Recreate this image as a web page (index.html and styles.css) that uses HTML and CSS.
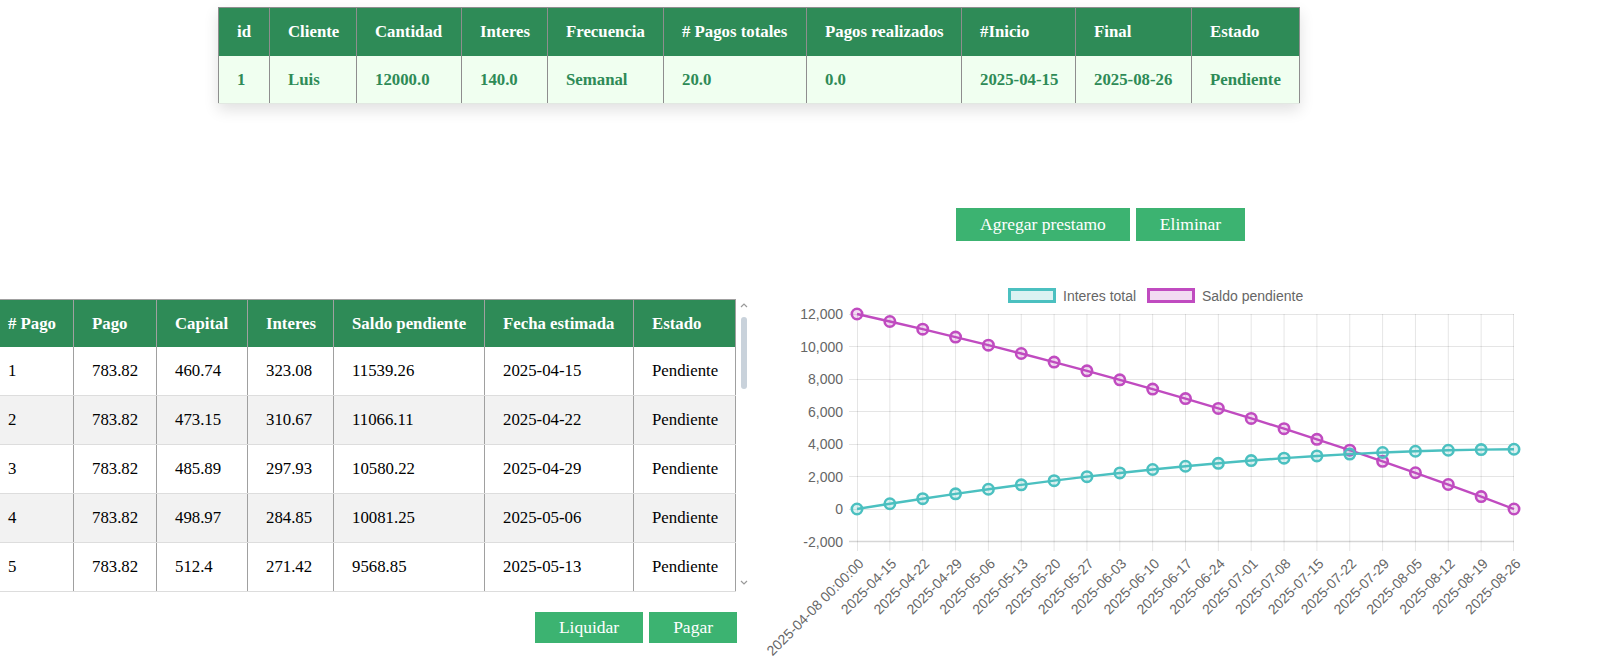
FILE: index.html
```html
<!DOCTYPE html>
<html lang="es">
<head>
<meta charset="utf-8">
<title>Prestamos</title>
<link rel="stylesheet" href="styles.css">
</head>
<body>
<main class="page">
  <section class="loan">
    <table class="loan-table">
      <colgroup>
        <col style="width:51px"><col style="width:87px"><col style="width:105px"><col style="width:86px"><col style="width:116px"><col style="width:143px"><col style="width:155px"><col style="width:114px"><col style="width:116px"><col style="width:108px">
      </colgroup>
      <thead>
        <tr><th>id</th><th>Cliente</th><th>Cantidad</th><th>Interes</th><th>Frecuencia</th><th># Pagos totales</th><th>Pagos realizados</th><th>#Inicio</th><th>Final</th><th>Estado</th></tr>
      </thead>
      <tbody>
        <tr><td>1</td><td>Luis</td><td>12000.0</td><td>140.0</td><td>Semanal</td><td>20.0</td><td>0.0</td><td>2025-04-15</td><td>2025-08-26</td><td>Pendiente</td></tr>
      </tbody>
    </table>
  </section>

  <div class="actions">
    <button class="btn btn-lg">Agregar prestamo</button>
    <button class="btn btn-lg">Eliminar</button>
  </div>

  <section class="bottom">
    <div class="schedule-col">
      <div class="schedule-box">
        <div class="schedule">
          <table class="schedule-table">
            <colgroup>
              <col style="width:84px"><col style="width:83px"><col style="width:91px"><col style="width:86px"><col style="width:151px"><col style="width:149px"><col style="width:102px">
            </colgroup>
            <thead>
              <tr><th># Pago</th><th>Pago</th><th>Capital</th><th>Interes</th><th>Saldo pendiente</th><th>Fecha estimada</th><th>Estado</th></tr>
            </thead>
            <tbody>
              <tr><td>1</td><td>783.82</td><td>460.74</td><td>323.08</td><td>11539.26</td><td>2025-04-15</td><td>Pendiente</td></tr>
              <tr><td>2</td><td>783.82</td><td>473.15</td><td>310.67</td><td>11066.11</td><td>2025-04-22</td><td>Pendiente</td></tr>
              <tr><td>3</td><td>783.82</td><td>485.89</td><td>297.93</td><td>10580.22</td><td>2025-04-29</td><td>Pendiente</td></tr>
              <tr><td>4</td><td>783.82</td><td>498.97</td><td>284.85</td><td>10081.25</td><td>2025-05-06</td><td>Pendiente</td></tr>
              <tr><td>5</td><td>783.82</td><td>512.4</td><td>271.42</td><td>9568.85</td><td>2025-05-13</td><td>Pendiente</td></tr>
              <tr><td>6</td><td>783.82</td><td>526.2</td><td>257.62</td><td>9042.65</td><td>2025-05-20</td><td>Pendiente</td></tr>
              <tr><td>7</td><td>783.82</td><td>540.36</td><td>243.46</td><td>8502.29</td><td>2025-05-27</td><td>Pendiente</td></tr>
              <tr><td>8</td><td>783.82</td><td>554.91</td><td>228.91</td><td>7947.38</td><td>2025-06-03</td><td>Pendiente</td></tr>
              <tr><td>9</td><td>783.82</td><td>569.85</td><td>213.97</td><td>7377.53</td><td>2025-06-10</td><td>Pendiente</td></tr>
              <tr><td>10</td><td>783.82</td><td>585.19</td><td>198.63</td><td>6792.34</td><td>2025-06-17</td><td>Pendiente</td></tr>
              <tr><td>11</td><td>783.82</td><td>600.95</td><td>182.87</td><td>6191.39</td><td>2025-06-24</td><td>Pendiente</td></tr>
              <tr><td>12</td><td>783.82</td><td>617.13</td><td>166.69</td><td>5574.26</td><td>2025-07-01</td><td>Pendiente</td></tr>
              <tr><td>13</td><td>783.82</td><td>633.74</td><td>150.08</td><td>4940.52</td><td>2025-07-08</td><td>Pendiente</td></tr>
              <tr><td>14</td><td>783.82</td><td>650.81</td><td>133.01</td><td>4289.71</td><td>2025-07-15</td><td>Pendiente</td></tr>
              <tr><td>15</td><td>783.82</td><td>668.33</td><td>115.49</td><td>3621.38</td><td>2025-07-22</td><td>Pendiente</td></tr>
              <tr><td>16</td><td>783.82</td><td>686.32</td><td>97.5</td><td>2935.06</td><td>2025-07-29</td><td>Pendiente</td></tr>
              <tr><td>17</td><td>783.82</td><td>704.8</td><td>79.02</td><td>2230.26</td><td>2025-08-05</td><td>Pendiente</td></tr>
              <tr><td>18</td><td>783.82</td><td>723.77</td><td>60.05</td><td>1506.49</td><td>2025-08-12</td><td>Pendiente</td></tr>
              <tr><td>19</td><td>783.82</td><td>743.26</td><td>40.56</td><td>763.23</td><td>2025-08-19</td><td>Pendiente</td></tr>
              <tr><td>20</td><td>783.82</td><td>763.27</td><td>20.55</td><td>0.0</td><td>2025-08-26</td><td>Pendiente</td></tr>
            </tbody>
          </table>
        </div>
        <svg class="arrow arrow-up" width="8" height="5" viewBox="0 0 8 5"><path d="M1 4 L4 1 L7 4" fill="none" stroke="#9a9a9a" stroke-width="1.2"/></svg>
        <div class="thumb"></div>
        <svg class="arrow arrow-down" width="8" height="5" viewBox="0 0 8 5"><path d="M1 1 L4 4 L7 1" fill="none" stroke="#9a9a9a" stroke-width="1.2"/></svg>
      </div>
      <div class="pay-actions">
        <button class="btn">Liquidar</button>
        <button class="btn">Pagar</button>
      </div>
    </div>

    <div class="chart-col">
      <svg class="chart" width="760" height="379" viewBox="0 0 760 379">
        <!-- legend -->
        <rect x="229.5" y="9.5" width="45" height="12" fill="rgba(75,192,192,0.2)" stroke="rgb(75,192,192)" stroke-width="3"/>
        <text class="lg" x="283" y="16">Interes total</text>
        <rect x="368.5" y="9.5" width="45" height="12" fill="rgba(192,75,192,0.2)" stroke="rgb(192,75,192)" stroke-width="3"/>
        <text class="lg" x="422" y="16">Saldo pendiente</text>

        <!-- horizontal grid -->
        <g stroke="rgba(0,0,0,0.1)" stroke-width="1">
          <line x1="69" y1="34.5" x2="734" y2="34.5"/>
          <line x1="69" y1="66.5" x2="734" y2="66.5"/>
          <line x1="69" y1="99.5" x2="734" y2="99.5"/>
          <line x1="69" y1="131.5" x2="734" y2="131.5"/>
          <line x1="69" y1="164.5" x2="734" y2="164.5"/>
          <line x1="69" y1="196.5" x2="734" y2="196.5"/>
          <line x1="69" y1="229.5" x2="734" y2="229.5"/>
        </g>
        <line x1="69" y1="261.5" x2="734" y2="261.5" stroke="rgba(0,0,0,0.16)" stroke-width="1.5"/>

        <!-- vertical grid -->
        <g stroke="rgba(0,0,0,0.1)" stroke-width="1">
          <line x1="77.5" y1="34" x2="77.5" y2="271"/>
          <line x1="109.85" y1="34" x2="109.85" y2="271"/>
          <line x1="142.7" y1="34" x2="142.7" y2="271"/>
          <line x1="175.55" y1="34" x2="175.55" y2="271"/>
          <line x1="208.4" y1="34" x2="208.4" y2="271"/>
          <line x1="241.25" y1="34" x2="241.25" y2="271"/>
          <line x1="274.1" y1="34" x2="274.1" y2="271"/>
          <line x1="306.95" y1="34" x2="306.95" y2="271"/>
          <line x1="339.8" y1="34" x2="339.8" y2="271"/>
          <line x1="372.65" y1="34" x2="372.65" y2="271"/>
          <line x1="405.5" y1="34" x2="405.5" y2="271"/>
          <line x1="438.35" y1="34" x2="438.35" y2="271"/>
          <line x1="471.2" y1="34" x2="471.2" y2="271"/>
          <line x1="504.05" y1="34" x2="504.05" y2="271"/>
          <line x1="536.9" y1="34" x2="536.9" y2="271"/>
          <line x1="569.75" y1="34" x2="569.75" y2="271"/>
          <line x1="602.6" y1="34" x2="602.6" y2="271"/>
          <line x1="635.45" y1="34" x2="635.45" y2="271"/>
          <line x1="668.3" y1="34" x2="668.3" y2="271"/>
          <line x1="701.15" y1="34" x2="701.15" y2="271"/>
          <line x1="733.5" y1="34" x2="733.5" y2="271"/>
        </g>

        <!-- y labels -->
        <g class="yl">
          <text x="63" y="34">12,000</text>
          <text x="63" y="66.5">10,000</text>
          <text x="63" y="99">8,000</text>
          <text x="63" y="131.5">6,000</text>
          <text x="63" y="164">4,000</text>
          <text x="63" y="196.5">2,000</text>
          <text x="63" y="229">0</text>
          <text x="63" y="261.5">-2,000</text>
        </g>

        <!-- x labels -->
        <g class="xl">
          <text x="81" y="281" transform="rotate(-45 81 281)">2025-04-08 00:00:00</text>
          <text x="113.85" y="281" transform="rotate(-45 113.85 281)">2025-04-15</text>
          <text x="146.7" y="281" transform="rotate(-45 146.7 281)">2025-04-22</text>
          <text x="179.55" y="281" transform="rotate(-45 179.55 281)">2025-04-29</text>
          <text x="212.4" y="281" transform="rotate(-45 212.4 281)">2025-05-06</text>
          <text x="245.25" y="281" transform="rotate(-45 245.25 281)">2025-05-13</text>
          <text x="278.1" y="281" transform="rotate(-45 278.1 281)">2025-05-20</text>
          <text x="310.95" y="281" transform="rotate(-45 310.95 281)">2025-05-27</text>
          <text x="343.8" y="281" transform="rotate(-45 343.8 281)">2025-06-03</text>
          <text x="376.65" y="281" transform="rotate(-45 376.65 281)">2025-06-10</text>
          <text x="409.5" y="281" transform="rotate(-45 409.5 281)">2025-06-17</text>
          <text x="442.35" y="281" transform="rotate(-45 442.35 281)">2025-06-24</text>
          <text x="475.2" y="281" transform="rotate(-45 475.2 281)">2025-07-01</text>
          <text x="508.05" y="281" transform="rotate(-45 508.05 281)">2025-07-08</text>
          <text x="540.9" y="281" transform="rotate(-45 540.9 281)">2025-07-15</text>
          <text x="573.75" y="281" transform="rotate(-45 573.75 281)">2025-07-22</text>
          <text x="606.6" y="281" transform="rotate(-45 606.6 281)">2025-07-29</text>
          <text x="639.45" y="281" transform="rotate(-45 639.45 281)">2025-08-05</text>
          <text x="672.3" y="281" transform="rotate(-45 672.3 281)">2025-08-12</text>
          <text x="705.15" y="281" transform="rotate(-45 705.15 281)">2025-08-19</text>
          <text x="738" y="281" transform="rotate(-45 738 281)">2025-08-26</text>
        </g>

        <!-- Saldo pendiente -->
        <g class="ds-saldo">
          <polyline fill="none" stroke="rgb(192,75,192)" stroke-width="2.4" points="77,34 109.85,41.49 142.7,49.18 175.55,57.07 208.4,65.18 241.25,73.51 274.1,82.06 306.95,90.84 339.8,99.86 372.65,109.12 405.5,118.62 438.35,128.39 471.2,138.42 504.05,148.72 536.9,159.29 569.75,170.15 602.6,181.31 635.45,192.76 668.3,204.52 701.15,216.6 734,229"/>
          <g fill="rgba(192,75,192,0.2)" stroke="rgb(192,75,192)" stroke-width="2.6">
            <circle cx="77" cy="34" r="5.2"/><circle cx="109.85" cy="41.49" r="5.2"/><circle cx="142.7" cy="49.18" r="5.2"/><circle cx="175.55" cy="57.07" r="5.2"/><circle cx="208.4" cy="65.18" r="5.2"/><circle cx="241.25" cy="73.51" r="5.2"/><circle cx="274.1" cy="82.06" r="5.2"/><circle cx="306.95" cy="90.84" r="5.2"/><circle cx="339.8" cy="99.86" r="5.2"/><circle cx="372.65" cy="109.12" r="5.2"/><circle cx="405.5" cy="118.62" r="5.2"/><circle cx="438.35" cy="128.39" r="5.2"/><circle cx="471.2" cy="138.42" r="5.2"/><circle cx="504.05" cy="148.72" r="5.2"/><circle cx="536.9" cy="159.29" r="5.2"/><circle cx="569.75" cy="170.15" r="5.2"/><circle cx="602.6" cy="181.31" r="5.2"/><circle cx="635.45" cy="192.76" r="5.2"/><circle cx="668.3" cy="204.52" r="5.2"/><circle cx="701.15" cy="216.6" r="5.2"/><circle cx="734" cy="229" r="5.2"/>
          </g>
        </g>

        <!-- Interes total -->
        <g class="ds-interes">
          <polyline fill="none" stroke="rgb(75,192,192)" stroke-width="2.4" points="77,229 109.85,223.75 142.7,218.7 175.55,213.86 208.4,209.23 241.25,204.82 274.1,200.63 306.95,196.68 339.8,192.96 372.65,189.48 405.5,186.25 438.35,183.28 471.2,180.57 504.05,178.13 536.9,175.97 569.75,174.1 602.6,172.51 635.45,171.23 668.3,170.25 701.15,169.59 734,169.26"/>
          <g fill="rgba(75,192,192,0.2)" stroke="rgb(75,192,192)" stroke-width="2.6">
            <circle cx="77" cy="229" r="5.2"/><circle cx="109.85" cy="223.75" r="5.2"/><circle cx="142.7" cy="218.7" r="5.2"/><circle cx="175.55" cy="213.86" r="5.2"/><circle cx="208.4" cy="209.23" r="5.2"/><circle cx="241.25" cy="204.82" r="5.2"/><circle cx="274.1" cy="200.63" r="5.2"/><circle cx="306.95" cy="196.68" r="5.2"/><circle cx="339.8" cy="192.96" r="5.2"/><circle cx="372.65" cy="189.48" r="5.2"/><circle cx="405.5" cy="186.25" r="5.2"/><circle cx="438.35" cy="183.28" r="5.2"/><circle cx="471.2" cy="180.57" r="5.2"/><circle cx="504.05" cy="178.13" r="5.2"/><circle cx="536.9" cy="175.97" r="5.2"/><circle cx="569.75" cy="174.1" r="5.2"/><circle cx="602.6" cy="172.51" r="5.2"/><circle cx="635.45" cy="171.23" r="5.2"/><circle cx="668.3" cy="170.25" r="5.2"/><circle cx="701.15" cy="169.59" r="5.2"/><circle cx="734" cy="169.26" r="5.2"/>
          </g>
        </g>
      </svg>
    </div>
  </section>
</main>
</body>
</html>
```

FILE: styles.css
```css
html, body {
  margin: 0;
  padding: 0;
  background: #ffffff;
  overflow: hidden;
}

body {
  font-family: "Liberation Serif", "Times New Roman", serif;
  font-size: 16.8px;
  color: #000;
}

.loan {
  padding: 7px 0 0 218px;
}

.loan-table {
  width: 1081px;
  table-layout: fixed;
  border-collapse: collapse;
  box-shadow: 0 6px 14px rgba(0, 0, 0, 0.12);
}

.loan-table th,
.loan-table td {
  text-align: left;
  padding: 0 0 0 18px;
  border-left: 1px solid #8e8e8e;
  border-right: 1px solid #8e8e8e;
  white-space: nowrap;
  font-weight: bold;
}

.loan-table th {
  background: #2e8b57;
  color: #ffffff;
  height: 48px;
  border-top: 1px solid #8e8e8e;
}

.loan-table td {
  background: #f0fff0;
  color: #2e8b57;
  height: 47px;
  border-bottom: 1px solid #e2e8e2;
}

.actions {
  display: flex;
  gap: 6px;
  margin-top: 104px;
  padding-left: 956px;
}

.btn {
  background: #3cb371;
  color: #ffffff;
  border: 0;
  border-radius: 0;
  font-family: "Liberation Serif", "Times New Roman", serif;
  font-size: 17.5px;
  line-height: 21px;
  padding: 5px 24px;
  margin: 0;
}

.btn-lg {
  padding: 6px 24px;
}

.bottom {
  display: flex;
  margin-top: 39px;
}

.schedule-col {
  flex: none;
  width: 761px;
  margin-left: -11px;
  padding-top: 19px;
}

.schedule-box {
  position: relative;
}

.schedule {
  width: 761px;
  height: 293px;
  overflow-y: auto;
  overflow-x: hidden;
  scrollbar-width: none;
}

.schedule::-webkit-scrollbar {
  display: none;
}

.thumb {
  position: absolute;
  left: 752px;
  top: 18px;
  width: 6px;
  height: 72px;
  border-radius: 3px;
  background: #c9d2db;
}

.arrow {
  position: absolute;
  left: 751px;
}

.arrow-up {
  top: 4px;
}

.arrow-down {
  top: 281px;
}

.schedule-table {
  width: 746px;
  table-layout: fixed;
  border-collapse: collapse;
}

.schedule-table th,
.schedule-table td {
  text-align: left;
  padding: 0 0 0 18px;
  white-space: nowrap;
  border-left: 1px solid #a0a0a0;
  border-right: 1px solid #a0a0a0;
}

.schedule-table th {
  background: #2e8b57;
  color: #ffffff;
  font-weight: bold;
  height: 47px;
  border-top: 1px solid #a0a0a0;
}

.schedule-table td {
  height: 48px;
  border-bottom: 1px solid #dddddd;
  background: #ffffff;
}

.schedule-table tbody tr:nth-child(even) td {
  background: #f2f2f2;
}

.pay-actions {
  display: flex;
  justify-content: flex-end;
  gap: 6px;
  margin-top: 20px;
  padding-right: 13px;
}

.chart-col {
  flex: none;
  margin-left: 30px;
}

.chart {
  display: block;
  overflow: visible;
  font-family: "Liberation Sans", Arial, sans-serif;
  font-size: 14px;
}

.chart .lg {
  fill: #666666;
  dominant-baseline: central;
}

.chart .yl text {
  fill: #666666;
  text-anchor: end;
  dominant-baseline: central;
}

.chart .xl text {
  fill: #666666;
  text-anchor: end;
  dominant-baseline: central;
}
```
